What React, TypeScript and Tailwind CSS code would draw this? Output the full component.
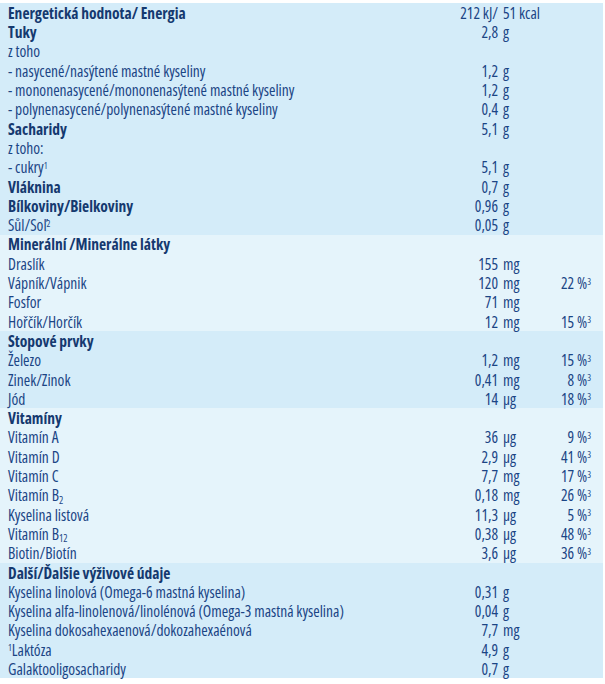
import React from 'react';

type Row = {
  label: React.ReactNode;
  value?: string;
  unit?: string;
  pct?: string;
  bold?: boolean;
};

type Section = { tone: 'dark' | 'light'; rows: Row[] };

const Pct = ({ v }: { v: string }) => (
  <>
    {v} %<sup className="text-[9px]">3</sup>
  </>
);

const sections: Section[] = [
  {
    tone: 'dark',
    rows: [
      { label: 'Energetická hodnota/ Energia', value: '212 kJ/', unit: '51 kcal', bold: true },
      { label: 'Tuky', value: '2,8', unit: 'g', bold: true },
      { label: 'z toho' },
      { label: '- nasycené/nasýtené mastné kyseliny', value: '1,2', unit: 'g' },
      { label: '- mononenasycené/mononenasýtené mastné kyseliny', value: '1,2', unit: 'g' },
      { label: '- polynenasycené/polynenasýtené mastné kyseliny', value: '0,4', unit: 'g' },
      { label: 'Sacharidy', value: '5,1', unit: 'g', bold: true },
      { label: 'z toho:' },
      {
        label: (
          <>
            - cukry<sup className="text-[9px]">1</sup>
          </>
        ),
        value: '5,1',
        unit: 'g',
      },
      { label: 'Vláknina', value: '0,7', unit: 'g', bold: true },
      { label: 'Bílkoviny/Bielkoviny', value: '0,96', unit: 'g', bold: true },
      {
        label: (
          <>
            Sůl/Soľ<sup className="text-[9px]">2</sup>
          </>
        ),
        value: '0,05',
        unit: 'g',
      },
    ],
  },
  {
    tone: 'light',
    rows: [
      { label: 'Minerální /Minerálne látky', bold: true },
      { label: 'Draslík', value: '155', unit: 'mg' },
      { label: 'Vápník/Vápnik', value: '120', unit: 'mg', pct: '22' },
      { label: 'Fosfor', value: '71', unit: 'mg' },
      { label: 'Hořčík/Horčík', value: '12', unit: 'mg', pct: '15' },
    ],
  },
  {
    tone: 'dark',
    rows: [
      { label: 'Stopové prvky', bold: true },
      { label: 'Železo', value: '1,2', unit: 'mg', pct: '15' },
      { label: 'Zinek/Zinok', value: '0,41', unit: 'mg', pct: '8' },
      { label: 'Jód', value: '14', unit: 'µg', pct: '18' },
    ],
  },
  {
    tone: 'light',
    rows: [
      { label: 'Vitamíny', bold: true },
      { label: 'Vitamín A', value: '36', unit: 'µg', pct: '9' },
      { label: 'Vitamín D', value: '2,9', unit: 'µg', pct: '41' },
      { label: 'Vitamín C', value: '7,7', unit: 'mg', pct: '17' },
      {
        label: (
          <>
            Vitamín B<sub className="text-[10px]">2</sub>
          </>
        ),
        value: '0,18',
        unit: 'mg',
        pct: '26',
      },
      { label: 'Kyselina listová', value: '11,3', unit: 'µg', pct: '5' },
      {
        label: (
          <>
            Vitamín B<sub className="text-[10px]">12</sub>
          </>
        ),
        value: '0,38',
        unit: 'µg',
        pct: '48',
      },
      { label: 'Biotin/Biotín', value: '3,6', unit: 'µg', pct: '36' },
    ],
  },
  {
    tone: 'dark',
    rows: [
      { label: 'Další/Ďalšie výživové údaje', bold: true },
      { label: 'Kyselina linolová (Omega-6 mastná kyselina)', value: '0,31', unit: 'g' },
      { label: 'Kyselina alfa-linolenová/linolénová (Omega-3 mastná kyselina)', value: '0,04', unit: 'g' },
      { label: 'Kyselina dokosahexaenová/dokozahexaénová', value: '7,7', unit: 'mg' },
      {
        label: (
          <>
            <sup className="text-[9px]">1</sup>Laktóza
          </>
        ),
        value: '4,9',
        unit: 'g',
      },
      { label: 'Galaktooligosacharidy', value: '0,7', unit: 'g' },
    ],
  },
];

export default function App() {
  return (
    <div
      className="w-[605px] h-[684px] bg-white pt-[3px] text-[#1b4585] text-[15.5px]"
      style={{ fontFamily: '"Open Sans", "Noto Sans", sans-serif', fontStretch: '75%' }}
    >
      <div className="w-[603px]">
        {sections.map((s, si) => (
          <div key={si} className={s.tone === 'dark' ? 'bg-[#d4ecf9]' : 'bg-[#e5f4fb]'}>
            {s.rows.map((r, ri) => (
              <div
                key={ri}
                className={`flex items-center h-[19.3px] pl-[8px] pr-[12px] pt-[2px] whitespace-nowrap leading-none ${
                  r.bold ? 'font-bold text-[#15396f]' : ''
                }`}
              >
                <div className="flex-1">{r.label}</div>
                <div className="w-[80px] text-right font-normal text-[#1b4585]">{r.value}</div>
                <div className="w-[38px] ml-[5px] font-normal text-[#1b4585]">{r.unit}</div>
                <div className="w-[50px] text-right font-normal text-[#1b4585]">
                  {r.pct ? <Pct v={r.pct} /> : null}
                </div>
              </div>
            ))}
          </div>
        ))}
      </div>
    </div>
  );
}
